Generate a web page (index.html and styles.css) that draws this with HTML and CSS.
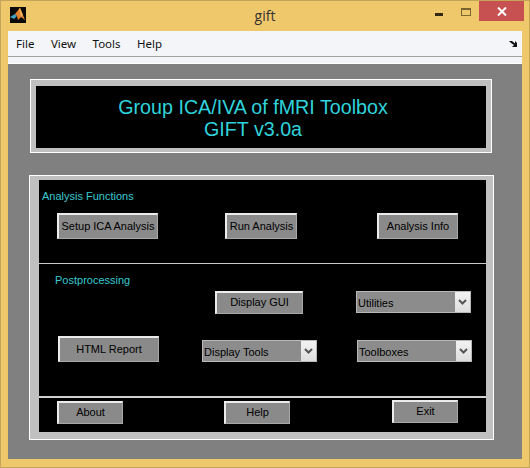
FILE: index.html
```html
<!DOCTYPE html>
<html lang="en">
<head>
    <meta charset="UTF-8">
    <title>gift</title>
    <link rel="stylesheet" href="styles.css">
</head>
<body>
    <div class="window">
        <header class="titlebar">
            <svg class="app-icon" width="16" height="16" viewBox="0 0 16 16">
                <rect width="16" height="16" fill="#0a0a0a"/>
                <path d="M0 10 L5 7 L7 9 L4 12 Z" fill="#3f9fc4"/>
                <path d="M5 7 L9 2 L10 1 L13 8 L15 13 L11 10 L8 13 L7 9 Z" fill="#e2822e"/>
                <path d="M9 2 L10 1 L13 8 L11 10 Z" fill="#f2b15a"/>
            </svg>
            <span class="win-title">gift</span>
            <div class="win-buttons">
                <span class="win-min"></span>
                <span class="win-max"></span>
                <span class="win-close">
                    <svg width="10" height="9" viewBox="0 0 10 9"><path d="M1 .5 L9 8.5 M9 .5 L1 8.5" stroke="#fff" stroke-width="2"/></svg>
                </span>
            </div>
        </header>

        <div class="client">
            <nav class="menubar">
                <a>File</a>
                <a>View</a>
                <a>Tools</a>
                <a>Help</a>
                <svg class="dock" width="8" height="6" viewBox="0 0 8 6"><path d="M0 0 H3 L6 2.5 V0 L8 2 V6 H3 L5 4 L2 2 Z" fill="#111"/></svg>
            </nav>
            <div class="menu-strip"></div>

            <main class="figure">
                <section class="title-panel">
                    <div class="title-box">
                        <h1>Group ICA/IVA of fMRI Toolbox</h1>
                        <h1>GIFT v3.0a</h1>
                    </div>
                </section>

                <section class="main-panel">
                    <div class="main-box">
                        <div class="block analysis">
                            <p class="label">Analysis Functions</p>
                            <div class="row">
                                <button class="btn setup">Setup ICA Analysis</button>
                                <button class="btn run">Run Analysis</button>
                                <button class="btn info">Analysis Info</button>
                            </div>
                        </div>

                        <div class="block post">
                            <p class="label post-label">Postprocessing</p>
                            <div class="row">
                                <button class="btn gui">Display GUI</button>
                                <div class="select utilities"><span>Utilities</span><i class="arrow"><svg width="9" height="6" viewBox="0 0 9 6"><path d="M1 1 L4.5 4.5 L8 1" fill="none" stroke="#555" stroke-width="2"/></svg></i></div>
                            </div>
                            <div class="row row-bottom">
                                <button class="btn report">HTML Report</button>
                                <div class="select tools"><span>Display Tools</span><i class="arrow"><svg width="9" height="6" viewBox="0 0 9 6"><path d="M1 1 L4.5 4.5 L8 1" fill="none" stroke="#555" stroke-width="2"/></svg></i></div>
                                <div class="select toolboxes"><span>Toolboxes</span><i class="arrow"><svg width="9" height="6" viewBox="0 0 9 6"><path d="M1 1 L4.5 4.5 L8 1" fill="none" stroke="#555" stroke-width="2"/></svg></i></div>
                            </div>
                        </div>

                        <div class="block footer">
                            <div class="row">
                                <button class="btn about">About</button>
                                <button class="btn help">Help</button>
                                <button class="btn exit">Exit</button>
                            </div>
                        </div>
                    </div>
                </section>
            </main>
        </div>
    </div>
</body>
</html>
```

FILE: styles.css
```css
* {
    margin: 0;
    padding: 0;
    box-sizing: border-box;
}
body {
    background: #f0c86c;
    width: 530px;
    height: 468px;
    overflow: hidden;
    font-family: "Liberation Sans", Arial, sans-serif;
}

.window {
    width: 530px;
    height: 468px;
    border: 1px solid #c4a458;
    background: #f0c86c;
    display: flex;
    flex-direction: column;
}

/* title bar */
.titlebar {
    height: 30px;
    position: relative;
    flex: none;
}
.app-icon {
    position: absolute;
    left: 9px;
    top: 6px;
}
.win-title {
    display: block;
    text-align: center;
    font-family: "Open Sans", "Noto Sans", sans-serif;
    font-size: 14px;
    line-height: 29px;
    color: #333;
}
.win-buttons {
    position: absolute;
    right: 5px;
    top: 0;
    display: flex;
    align-items: flex-start;
}
.win-min {
    width: 8px;
    height: 3px;
    background: #33290f;
    margin-top: 12px;
    margin-right: 18px;
}
.win-max {
    width: 10px;
    height: 8px;
    border: 1px solid #7a6430;
    border-top-width: 2px;
    margin-top: 7px;
    margin-right: 8px;
}
.win-close {
    width: 45px;
    height: 20px;
    background: #c75050;
    display: flex;
    align-items: center;
    justify-content: center;
}

/* client area */
.client {
    margin: 0 7px 8px;
    flex: 1;
    display: flex;
    flex-direction: column;
}
.menubar {
    height: 26px;
    background: #f4f5f8;
    border-bottom: 1px solid #a0a0a0;
    display: flex;
    align-items: center;
    padding-left: 8px;
    gap: 16.5px;
    font-family: "Noto Sans", sans-serif;
    font-size: 11.5px;
    color: #111;
    position: relative;
}
.dock {
    position: absolute;
    right: 5px;
    top: 10px;
}
.menu-strip {
    height: 7px;
    background: #f4f5f8;
    border-bottom: 1px solid #fff;
}

.figure {
    flex: 1;
    background: #808080;
    padding: 15px 30px 0 21px;
}

/* header panel */
.title-panel {
    width: 462px;
    height: 74px;
    margin-left: 1px;
    background: #c0c0c0;
    border: 1px solid #fff;
    padding: 6px 5px 4px;
}
.title-box {
    height: 100%;
    background: #000;
    padding: 10px 16px 0 0;
    text-align: center;
}
h1 {
    font-size: 19.7px;
    font-weight: normal;
    line-height: 22px;
    color: #2fd3dc;
}

/* main panel */
.main-panel {
    width: 465px;
    height: 265px;
    margin-top: 22px;
    background: #c0c0c0;
    border: 1px solid #fff;
    padding: 4px 7px 7px 9px;
}
.main-box {
    height: 100%;
    background: #000;
    display: flex;
    flex-direction: column;
}
.block {
    flex: none;
}
.analysis {
    height: 84px;
    border-bottom: 1px solid #c8c8c8;
    padding: 10px 0 0 3px;
}
.post {
    height: 134px;
    border-bottom: 2px solid #d0d0d0;
    padding-top: 10px;
}
.footer {
    flex: 1;
}

.label {
    font-size: 11px;
    line-height: 13px;
    color: #39c9d0;
}
.post-label {
    margin-left: 16px;
}

.row {
    display: flex;
    align-items: flex-start;
}
.row-bottom {
    align-items: flex-end;
    height: 48px;
}

/* buttons */
.btn {
    flex: none;
    background: #8a8a8a;
    border: 1px solid;
    border-width: 2px 1px 1px 2px;
    border-color: #ececec #a8a8a8 #a8a8a8 #ececec;
    font-family: "Liberation Sans", Arial, sans-serif;
    font-size: 11px;
    white-space: nowrap;
    color: #000;
    padding: 0 0 2px;
}
.setup {
    width: 101px;
    height: 26px;
    margin: 10px 0 0 15px;
}
.run {
    width: 72px;
    height: 26px;
    margin: 10px 0 0 67px;
}
.info {
    width: 81px;
    height: 26px;
    margin: 10px 0 0 80px;
}
.gui {
    width: 88px;
    height: 23px;
    margin: 4px 0 0 176px;
}
.report {
    width: 101px;
    height: 26px;
    margin-left: 19px;
}
.about {
    width: 66px;
    height: 23px;
    margin: 3px 0 0 18px;
}
.help {
    width: 66px;
    height: 23px;
    margin: 3px 0 0 101px;
}
.exit {
    width: 66px;
    height: 23px;
    margin: 2px 0 0 102px;
}

/* popup menus */
.select {
    flex: none;
    width: 115px;
    height: 22px;
    background: #8c8c8c;
    border: 1px solid #b8b8b8;
    display: flex;
    align-items: center;
    justify-content: space-between;
    font-size: 11px;
    color: #000;
    padding-left: 1px;
}
.select span {
    padding-top: 1px;
}
.arrow {
    width: 15px;
    height: 20px;
    background: linear-gradient(#f2f2f2, #dedede);
    display: flex;
    align-items: center;
    justify-content: center;
}
.utilities {
    margin: 4px 0 0 53px;
}
.tools {
    margin-left: 43px;
}
.toolboxes {
    margin-left: 40px;
}
```
